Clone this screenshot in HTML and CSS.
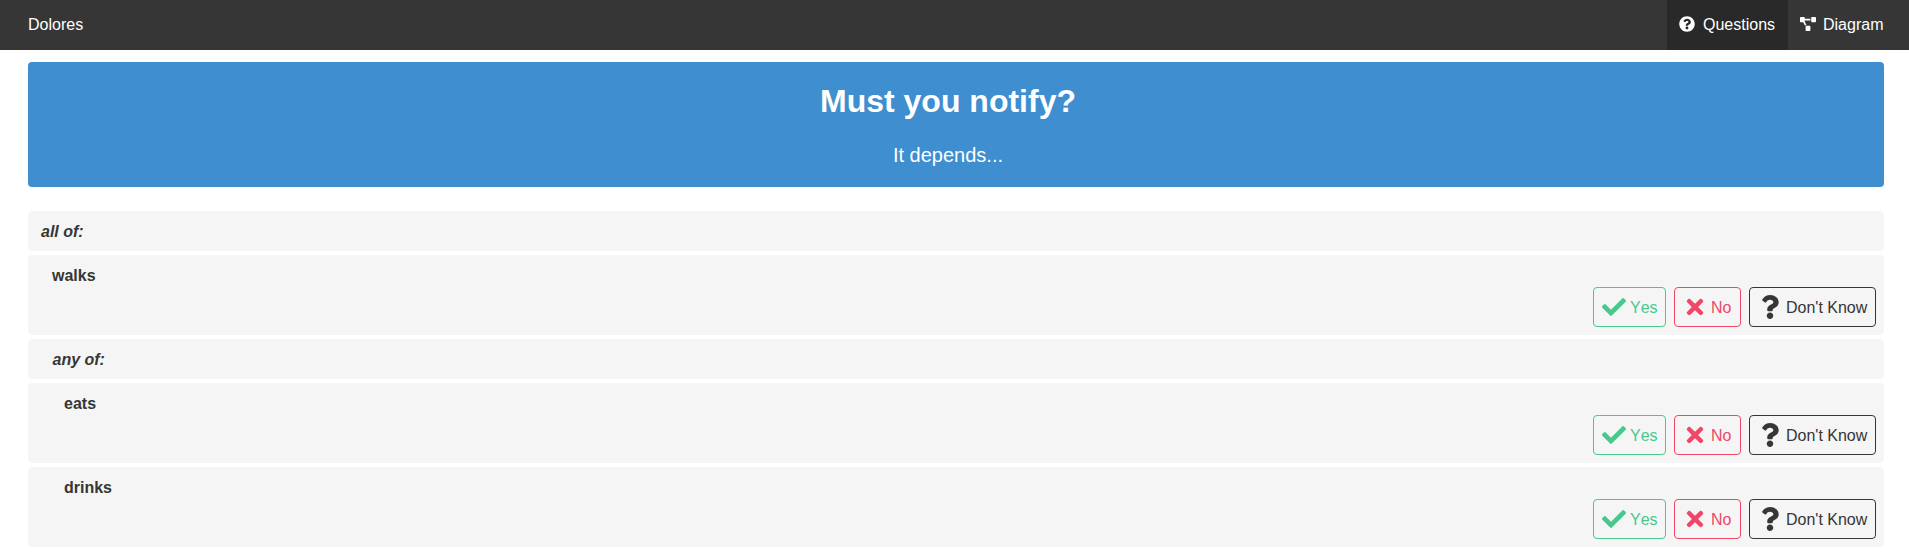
FILE: index.html
```
<!DOCTYPE html>
<html lang="en">
<head>
<meta charset="utf-8">
<title>Dolores</title>
<link rel="stylesheet" href="styles.css">
</head>
<body>
<svg class="sprite" aria-hidden="true">
  <symbol id="check" viewBox="0 0 512 512"><path d="M173.898 439.404l-166.4-166.4c-9.997-9.997-9.997-26.206 0-36.204l36.203-36.204c9.997-9.998 26.207-9.998 36.204 0L192 312.69 432.095 72.596c9.997-9.997 26.207-9.997 36.204 0l36.203 36.204c9.997 9.997 9.997 26.206 0 36.204l-294.4 294.401c-9.998 9.997-26.207 9.997-36.204-.001z"/></symbol>
  <symbol id="times" viewBox="0 0 352 512"><path d="M242.72 256l100.07-100.07c12.28-12.28 12.28-32.19 0-44.48l-22.24-22.24c-12.28-12.28-32.19-12.28-44.48 0L176 189.28 75.93 89.21c-12.28-12.28-32.19-12.28-44.48 0L9.21 111.45c-12.28 12.28-12.28 32.19 0 44.48L109.28 256 9.21 356.07c-12.28 12.28-12.28 32.19 0 44.48l22.24 22.24c12.28 12.28 32.2 12.28 44.48 0L176 322.72l100.07 100.07c12.28 12.28 32.2 12.28 44.48 0l22.24-22.24c12.28-12.28 12.28-32.19 0-44.48L242.72 256z"/></symbol>
  <symbol id="question" viewBox="0 0 384 512"><path d="M202.021 0C122.202 0 70.503 32.703 29.914 91.026c-7.363 10.58-5.093 25.086 5.178 32.874l43.138 32.709c10.373 7.865 25.132 6.026 33.253-4.148 25.049-31.381 43.63-49.449 82.757-49.449 30.764 0 68.816 19.799 68.816 49.631 0 22.552-18.617 34.134-48.993 51.164-35.423 19.86-82.299 44.576-82.299 106.405V320c0 13.255 10.745 24 24 24h72.471c13.255 0 24-10.745 24-24v-5.773c0-42.86 125.268-44.645 125.268-160.627C377.504 66.256 286.902 0 202.021 0zM192 373.459c-38.196 0-69.271 31.075-69.271 69.271 0 38.195 31.075 69.27 69.271 69.27s69.271-31.075 69.271-69.271-31.075-69.27-69.271-69.27z"/></symbol>
</svg>
<nav class="navbar">
  <a class="brand">Dolores</a>
  <div class="tabs">
    <a class="tab tab-active"><svg class="tab-icon" viewBox="0 0 512 512"><path d="M504 256c0 136.997-111.043 248-248 248S8 392.997 8 256C8 119.083 119.043 8 256 8s248 111.083 248 248zM262.655 90c-54.497 0-89.255 22.957-116.549 63.758-3.536 5.286-2.353 12.415 2.715 16.258l34.699 26.31c5.205 3.947 12.621 3.008 16.665-2.122 17.864-22.658 30.113-35.797 57.303-35.797 20.429 0 45.698 13.148 45.698 32.958 0 14.976-12.363 22.667-32.534 33.976C247.128 238.528 216 254.941 216 296v4c0 6.627 5.373 12 12 12h56c6.627 0 12-5.373 12-12v-1.333c0-28.462 83.186-29.647 83.186-106.667 0-58.002-60.165-102-116.531-102zM256 338c-25.365 0-46 20.635-46 46 0 25.364 20.635 46 46 46s46-20.636 46-46c0-25.365-20.635-46-46-46z"/></svg>Questions</a>
    <a class="tab"><svg class="tab-icon tab-icon-wide" viewBox="0 0 640 512" preserveAspectRatio="none"><path d="M384 320H256c-17.67 0-32 14.33-32 32v128c0 17.67 14.33 32 32 32h128c17.67 0 32-14.33 32-32V352c0-17.67-14.33-32-32-32zM192 32c0-17.67-14.33-32-32-32H32C14.33 0 0 14.33 0 32v128c0 17.67 14.33 32 32 32h95.72l73.16 128.04C211.98 300.98 232.4 288 256 288h.28L192 175.51V128h224V64H192V32zM608 0H480c-17.67 0-32 14.33-32 32v128c0 17.67 14.33 32 32 32h128c17.67 0 32-14.33 32-32V32c0-17.67-14.33-32-32-32z"/></svg>Diagram</a>
  </div>
</nav>
<main class="page">
  <section class="notification">
    <h1 class="title">Must you notify?</h1>
    <p class="subtitle">It depends...</p>
  </section>
  <div class="rules">
    <div class="rule group">all of:</div>
    <div class="rule level-1">
      <span>walks</span>
      <div class="answers">
        <button class="button yes"><svg class="icon"><use href="#check"/></svg><span class="label">Yes</span></button>
        <button class="button no"><svg class="icon"><use href="#times"/></svg><span class="label">No</span></button>
        <button class="button unknown"><svg class="icon"><use href="#question"/></svg><span class="label">Don't Know</span></button>
      </div>
    </div>
    <div class="rule group level-1">any of:</div>
    <div class="rule level-2">
      <span>eats</span>
      <div class="answers">
        <button class="button yes"><svg class="icon"><use href="#check"/></svg><span class="label">Yes</span></button>
        <button class="button no"><svg class="icon"><use href="#times"/></svg><span class="label">No</span></button>
        <button class="button unknown"><svg class="icon"><use href="#question"/></svg><span class="label">Don't Know</span></button>
      </div>
    </div>
    <div class="rule level-2">
      <span>drinks</span>
      <div class="answers">
        <button class="button yes"><svg class="icon"><use href="#check"/></svg><span class="label">Yes</span></button>
        <button class="button no"><svg class="icon"><use href="#times"/></svg><span class="label">No</span></button>
        <button class="button unknown"><svg class="icon"><use href="#question"/></svg><span class="label">Don't Know</span></button>
      </div>
    </div>
  </div>
</main>
</body>
</html>
```
FILE: styles.css
```
* {
  box-sizing: border-box;
}

body {
  margin: 0;
  background: #fff;
  color: #363636;
  font: 16px/24px "Liberation Sans", Arial, sans-serif;
}

.sprite {
  display: none;
}

.navbar {
  display: flex;
  justify-content: space-between;
  height: 50px;
  padding: 0 12px 0 16px;
  background: #363636;
  color: #fff;
}

.brand,
.tab {
  display: flex;
  align-items: center;
  padding: 0 12px;
}

.tabs {
  display: flex;
}

.tab {
  width: 109px;
}

.tab-active {
  width: 121px;
  background: #292929;
}

.tab-icon {
  flex: none;
  width: 16px;
  height: 16px;
  margin: -2px 8px 0 0;
  fill: currentColor;
}

.tab-icon-wide {
  height: 14px;
  margin-right: 7px;
}

.page {
  padding: 12px 25px 0 28px;
}

.notification {
  margin-bottom: 24px;
  padding: 21px 40px 19px 24px;
  border-radius: 4px;
  background: #3e8ed0;
  color: #fff;
  text-align: center;
}

.title {
  margin: 0 0 24px;
  font-size: 32px;
  font-weight: 700;
  line-height: 36px;
}

.subtitle {
  margin: 0;
  font-size: 20px;
  line-height: 25px;
}

.rules {
  display: flex;
  flex-direction: column;
  gap: 4px;
}

.rule {
  display: flex;
  flex-direction: column;
  padding: 9px 8px 8px 12px;
  border-radius: 4px;
  background: #f5f5f5;
  font-weight: 700;
  line-height: 23px;
}

.group {
  padding-left: 13px;
  font-style: italic;
}

.level-1 {
  padding-left: 24px;
}

.group.level-1 {
  padding-left: 24.5px;
}

.level-2 {
  padding-left: 36px;
}

.answers {
  display: flex;
  justify-content: flex-end;
  gap: 8px;
}

.button {
  display: flex;
  align-items: center;
  gap: 4px;
  height: 40px;
  padding: 0 8px;
  border: 1px solid currentColor;
  border-radius: 4px;
  background: transparent;
  font: inherit;
  font-weight: 400;
  font-kerning: none;
  white-space: nowrap;
}

.label {
  padding-top: 1px;
}

.icon {
  flex: none;
  width: 24px;
  height: 24px;
  fill: currentColor;
}

.yes {
  width: 73px;
  color: #48c78e;
}

.no {
  width: 67px;
  color: #f14668;
}

.unknown {
  width: 127px;
  color: #363636;
}
```
